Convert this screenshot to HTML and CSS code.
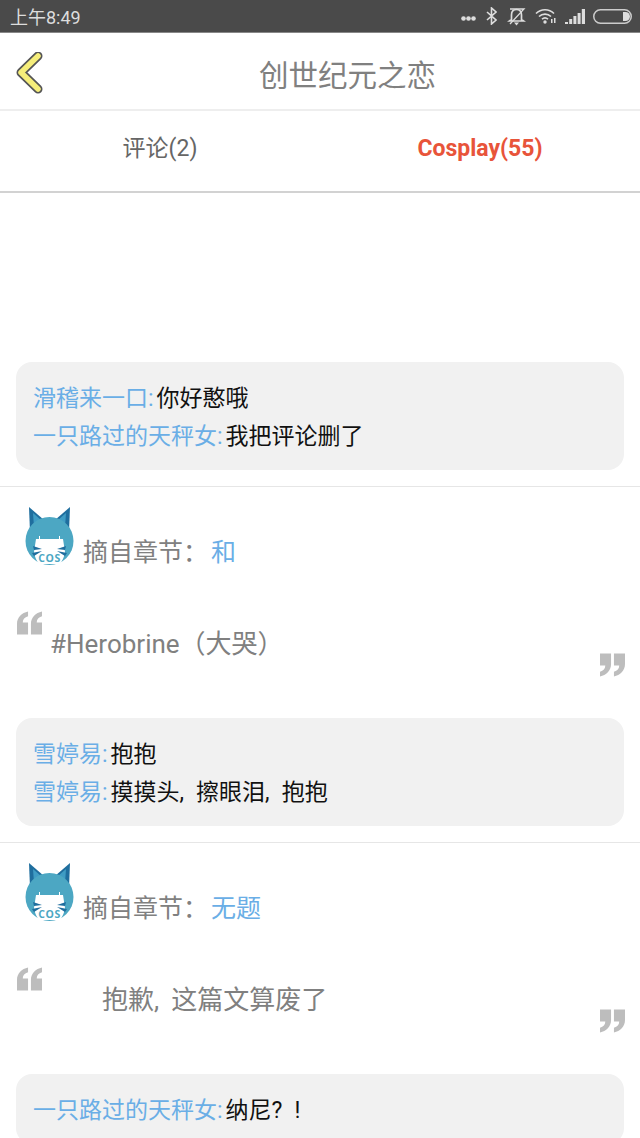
FILE: index.html
```html
<!DOCTYPE html>
<html lang="zh-CN">
<head>
    <meta charset="UTF-8">
    <meta name="viewport" content="width=device-width, initial-scale=1.0">
    <title>创世纪元之恋</title>
    <link rel="stylesheet" href="styles.css">
</head>
<body>

    <!-- status bar -->
    <div class="status">
        <span class="status-time">上午8:49</span>
        <div class="status-icons">
            <svg class="ic-dots" width="15" height="5" viewBox="0 0 15 5"><circle cx="2.500" cy="2.500" r="2.300"/><circle cx="7.500" cy="2.500" r="2.300"/><circle cx="12.500" cy="2.500" r="2.300"/></svg>
            <svg class="ic-bt" width="11" height="18" viewBox="0 0 11 18"><path d="M1 5l9 8-4.500 4V1L10 5l-9 8" fill="none" stroke="#ddd" stroke-width="1.600"/></svg>
            <svg class="ic-mute" width="19" height="19" viewBox="0 0 19 19"><path d="M9.500 2.500c-3.500 0-5 2.500-5 5.500v4.500l-2 1.500h14l-2-1.500V8c0-3-1.500-5.500-5-5.500z" fill="none" stroke="#ddd" stroke-width="1.700"/><path d="M7 15.500h5l-2.500 3z" fill="#ddd"/><path d="M3 2h14L3 17" fill="none" stroke="#ddd" stroke-width="1.300"/></svg>
            <svg class="ic-wifi" width="22" height="16" viewBox="0 0 22 16"><path d="M1 5.500c5-5 13-5 18 0M4 8.500c3.300-3.200 8.700-3.200 12 0M7 11.200c1.700-1.500 4.300-1.500 6 0" fill="none" stroke="#ddd" stroke-width="1.600"/><circle cx="10" cy="14" r="1.700" fill="#ddd"/><path d="M16 11h1.500v4H16zM19 10h1.500v5H19z" fill="#ddd"/></svg>
            <svg class="ic-signal" width="20" height="15" viewBox="0 0 20 15"><path d="M0 13h3v2H0zM4.200 10h3v5h-3zM8.400 7h3v8h-3zM12.600 4h3v11h-3zM16.800 0H20v15h-3.200z" fill="#ddd"/></svg>
            <svg class="ic-batt" width="39" height="15" viewBox="0 0 39 15"><rect x="0.750" y="0.750" width="37.500" height="13.500" rx="6.700" fill="none" stroke="#ccc" stroke-width="1.500"/><path d="M30 3h2.500a4.500 4.500 0 0 1 0 9H30z" fill="#ddd"/></svg>
        </div>
    </div>

    <!-- title -->
    <header class="topbar">
        <div class="back">
            <svg width="30" height="42" viewBox="0 0 30 42">
                <path d="M24 4L7 20.500 24 37" fill="none" stroke="#555" stroke-width="9" stroke-linecap="round" stroke-linejoin="round"/>
                <path d="M24 4L7 20.500 24 37" fill="none" stroke="#f6ee7a" stroke-width="5.500" stroke-linecap="round" stroke-linejoin="round"/>
            </svg>
        </div>
        <h1 class="title">创世纪元之恋</h1>
    </header>

    <nav class="tabs">
        <div class="tab">评论(2)</div>
        <div class="tab tab-on">Cosplay(55)</div>
    </nav>

    <div class="blank"></div>

    <section class="post post-first">
        <div class="comments">
            <p><span class="who">滑稽来一口:</span>你好憨哦</p>
            <p><span class="who">一只路过的天秤女:</span>我把评论删了</p>
        </div>
    </section>

    <section class="post">
        <div class="post-head">
            <svg class="avatar" width="50" height="60" viewBox="0 0 50 60">
                <path d="M4 1l15 13L5 26z" fill="#1f6e9e"/>
                <path d="M45 1L30 14l14 12z" fill="#1f6e9e"/>
                <path d="M8 7l8 7-7 7zM41 7l-8 7 7 7z" fill="#3f9cc4"/>
                <circle cx="24.500" cy="35" r="24" fill="#4ca7c3"/>
                <path d="M11 33h3v-3h1v3h19v-3h1v3h3l2 13c-1 6-3 9-5 12H14c-2-3-4-6-5-12z" fill="#fff"/>
                <path d="M8 40l9 3-8 1zM7 47l10-2-8 5zM41 40l-9 3 8 1zM42 47l-10-2 8 5z" fill="#1f6e9e"/>
                <text class="cos" x="24.500" y="56" text-anchor="middle">COS</text>
            </svg>
            <div class="chapter">摘自章节：<span class="chapter-name">和</span></div>
        </div>
        <div class="quote">
            <svg class="q-open" width="25" height="24" viewBox="0 0 26 24"><path d="M11.500 0C5 1.500 0 6 0 13v11h11.500V11.500H6C6 8 8 6 11.500 5zM26 0c-6.500 1.500-11.500 6-11.500 13v11H26V11.500h-5.500c0-3.500 2-5.500 5.500-6.500z"/></svg>
            <div class="quote-text">#Herobrine（大哭）</div>
            <svg class="q-close" width="25" height="24" viewBox="0 0 26 24"><path d="M0 0h11.500v11c0 7-5 11.500-11.500 13v-5c3.500-1 5.500-3 5.500-6.500H0zM14.500 0H26v11c0 7-5 11.500-11.500 13v-5c3.500-1 5.500-3 5.500-6.500h-5.500z"/></svg>
        </div>
        <div class="comments">
            <p><span class="who">雪婷易:</span>抱抱</p>
            <p><span class="who">雪婷易:</span>摸摸头<span class="punct">,</span>擦眼泪<span class="punct">,</span>抱抱</p>
        </div>
    </section>

    <section class="post">
        <div class="post-head">
            <svg class="avatar" width="50" height="60" viewBox="0 0 50 60">
                <path d="M4 1l15 13L5 26z" fill="#1f6e9e"/>
                <path d="M45 1L30 14l14 12z" fill="#1f6e9e"/>
                <path d="M8 7l8 7-7 7zM41 7l-8 7 7 7z" fill="#3f9cc4"/>
                <circle cx="24.500" cy="35" r="24" fill="#4ca7c3"/>
                <path d="M11 33h3v-3h1v3h19v-3h1v3h3l2 13c-1 6-3 9-5 12H14c-2-3-4-6-5-12z" fill="#fff"/>
                <path d="M8 40l9 3-8 1zM7 47l10-2-8 5zM41 40l-9 3 8 1zM42 47l-10-2 8 5z" fill="#1f6e9e"/>
                <text class="cos" x="24.500" y="56" text-anchor="middle">COS</text>
            </svg>
            <div class="chapter">摘自章节：<span class="chapter-name">无题</span></div>
        </div>
        <div class="quote">
            <svg class="q-open" width="25" height="24" viewBox="0 0 26 24"><path d="M11.500 0C5 1.500 0 6 0 13v11h11.500V11.500H6C6 8 8 6 11.500 5zM26 0c-6.500 1.500-11.500 6-11.500 13v11H26V11.500h-5.500c0-3.500 2-5.500 5.500-6.500z"/></svg>
            <div class="quote-text quote-indent">抱歉<span class="punct">,</span>这篇文算废了</div>
            <svg class="q-close" width="25" height="24" viewBox="0 0 26 24"><path d="M0 0h11.500v11c0 7-5 11.500-11.500 13v-5c3.500-1 5.500-3 5.500-6.500H0zM14.500 0H26v11c0 7-5 11.500-11.500 13v-5c3.500-1 5.500-3 5.500-6.500h-5.500z"/></svg>
        </div>
        <div class="comments">
            <p><span class="who">一只路过的天秤女:</span>纳尼<span class="punct">?</span>!</p>
        </div>
    </section>

</body>
</html>
```

FILE: styles.css
```css
/* Basic styling */
* {
    box-sizing: border-box;
}

html, body {
    margin: 0;
    padding: 0;
    height: 1138px;
    overflow: hidden;
}

body {
    font-family: Roboto, "Noto Sans CJK SC", sans-serif;
    background-color: #fff;
    color: #777;
}

p, h1 {
    margin: 0;
    font-weight: normal;
}

/* status bar */
.status {
    height: 33px;
    padding: 0 8px 0 10px;
    background-color: #4a4a4a;
    border-bottom: 1px solid #888;
    display: flex;
    justify-content: space-between;
    align-items: center;
    color: #ddd;
    font-size: 18px;
}

.status-icons {
    display: flex;
    align-items: center;
}

.status-icons svg {
    display: block;
    fill: #ddd;
}

.ic-dots { margin-top: 4px; margin-right: 10px; }
.ic-bt { margin-right: 10px; }
.ic-mute { margin-right: 9px; }
.ic-wifi { margin-right: 8px; }
.ic-signal { margin-right: 8px; }

/* title */
.topbar {
    height: 78px;
    padding-top: 4px;
    border-bottom: 2px solid #eee;
    display: flex;
    align-items: center;
}

.back {
    width: 55px;
    padding-left: 14px;
    flex: none;
}

.back svg {
    display: block;
}

.title {
    flex: 1;
    text-align: center;
    font-size: 29.500px;
    color: #808080;
}

.tabs {
    height: 82px;
    padding-bottom: 5px;
    border-bottom: 2px solid #d2d2d2;
    display: flex;
    align-items: center;
}

.tab {
    flex: 1;
    text-align: center;
    font-size: 23px;
    line-height: 30px;
    color: #666;
}

.tab-on {
    color: #e8543a;
    font-weight: bold;
}

.blank {
    height: 169px;
}

/* posts */
.post {
    padding: 19px 16px 16px;
    border-bottom: 1px solid #e6e6e6;
}

.post-first {
    padding-top: 0;
}

.post-head {
    display: flex;
    align-items: flex-end;
    padding-left: 9px;
}

.avatar {
    display: block;
    flex: none;
}

.cos {
    font-family: "Open Sans", sans-serif;
    font-size: 10.500px;
    font-weight: bold;
    letter-spacing: 0.500px;
    fill: #4ca7c3;
}

.chapter {
    margin-left: 8px;
    margin-bottom: -2px;
    font-size: 25px;
    line-height: 30px;
    color: #808080;
}

.chapter-name {
    margin-left: 3px;
    color: #6aaee6;
}

.quote {
    margin-top: 45px;
    height: 66px;
    display: grid;
    grid-template-columns: 26px 1fr 25px;
}

.q-open, .q-close {
    display: block;
    fill: #bdbdbd;
}

.q-open {
    margin-left: 1px;
}

.q-close {
    align-self: end;
    margin-left: 1px;
}

.quote-text {
    padding: 16px 0 0 8px;
    font-size: 26px;
    line-height: 34px;
    color: #808080;
}

.quote-indent {
    padding-left: 60px;
}

.comments {
    margin-top: 41px;
    padding: 18px 17px 14px;
    background-color: #f1f1f1;
    border-radius: 16px;
    font-size: 23px;
    line-height: 38px;
    color: #111;
}

.post-first .comments {
    margin-top: 0;
}

.who {
    margin-right: 3px;
    color: #6aaee6;
}

.punct {
    margin-right: 12px;
}
```
